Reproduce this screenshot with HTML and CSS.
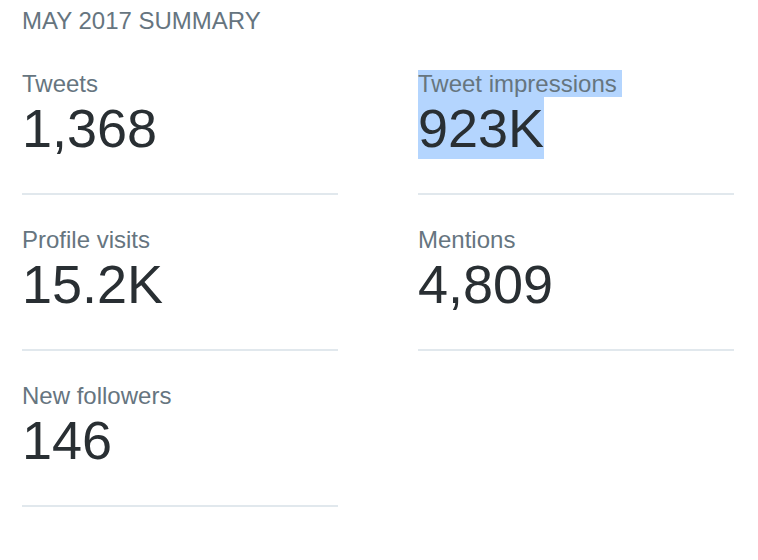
FILE: index.html
```html
<!DOCTYPE html>
<html>
<head>
<meta charset="utf-8">
<link rel="stylesheet" href="styles.css">
</head>
<body>
<div class="summary">
  <div class="title">MAY 2017 SUMMARY</div>
  <div class="grid">
    <div class="stat">
      <div class="label">Tweets</div>
      <div class="value">1,368</div>
    </div>
    <div class="stat">
      <div class="label"><span class="sel sel-label">Tweet impressions</span></div>
      <div class="value"><span class="sel">923K</span></div>
    </div>
    <div class="stat">
      <div class="label">Profile visits</div>
      <div class="value">15.2K</div>
    </div>
    <div class="stat">
      <div class="label">Mentions</div>
      <div class="value">4,809</div>
    </div>
    <div class="stat">
      <div class="label">New followers</div>
      <div class="value">146</div>
    </div>
  </div>
</div>
</body>
</html>
```

FILE: styles.css
```css
html, body {
  margin: 0;
  padding: 0;
  background: #ffffff;
}

body {
  font-family: "Liberation Sans", Arial, Helvetica, sans-serif;
}

.summary {
  padding: 7px 0 0 22px;
}

.title {
  font-size: 24px;
  line-height: 27px;
  color: #66757f;
  margin-bottom: 36px;
}

.grid {
  display: grid;
  grid-template-columns: 316px 316px;
  column-gap: 80px;
  row-gap: 31px;
}

.stat {
  padding-bottom: 34px;
  border-bottom: 2px solid #e1e8ed;
}

.label {
  font-size: 24px;
  line-height: 27px;
  color: #66757f;
  white-space: nowrap;
}

.value {
  font-size: 54px;
  line-height: 62px;
  color: #292f33;
  white-space: nowrap;
}

.sel {
  display: inline-block;
  background: #b4d5fe;
}

.sel-label {
  padding-right: 5px;
}
```
